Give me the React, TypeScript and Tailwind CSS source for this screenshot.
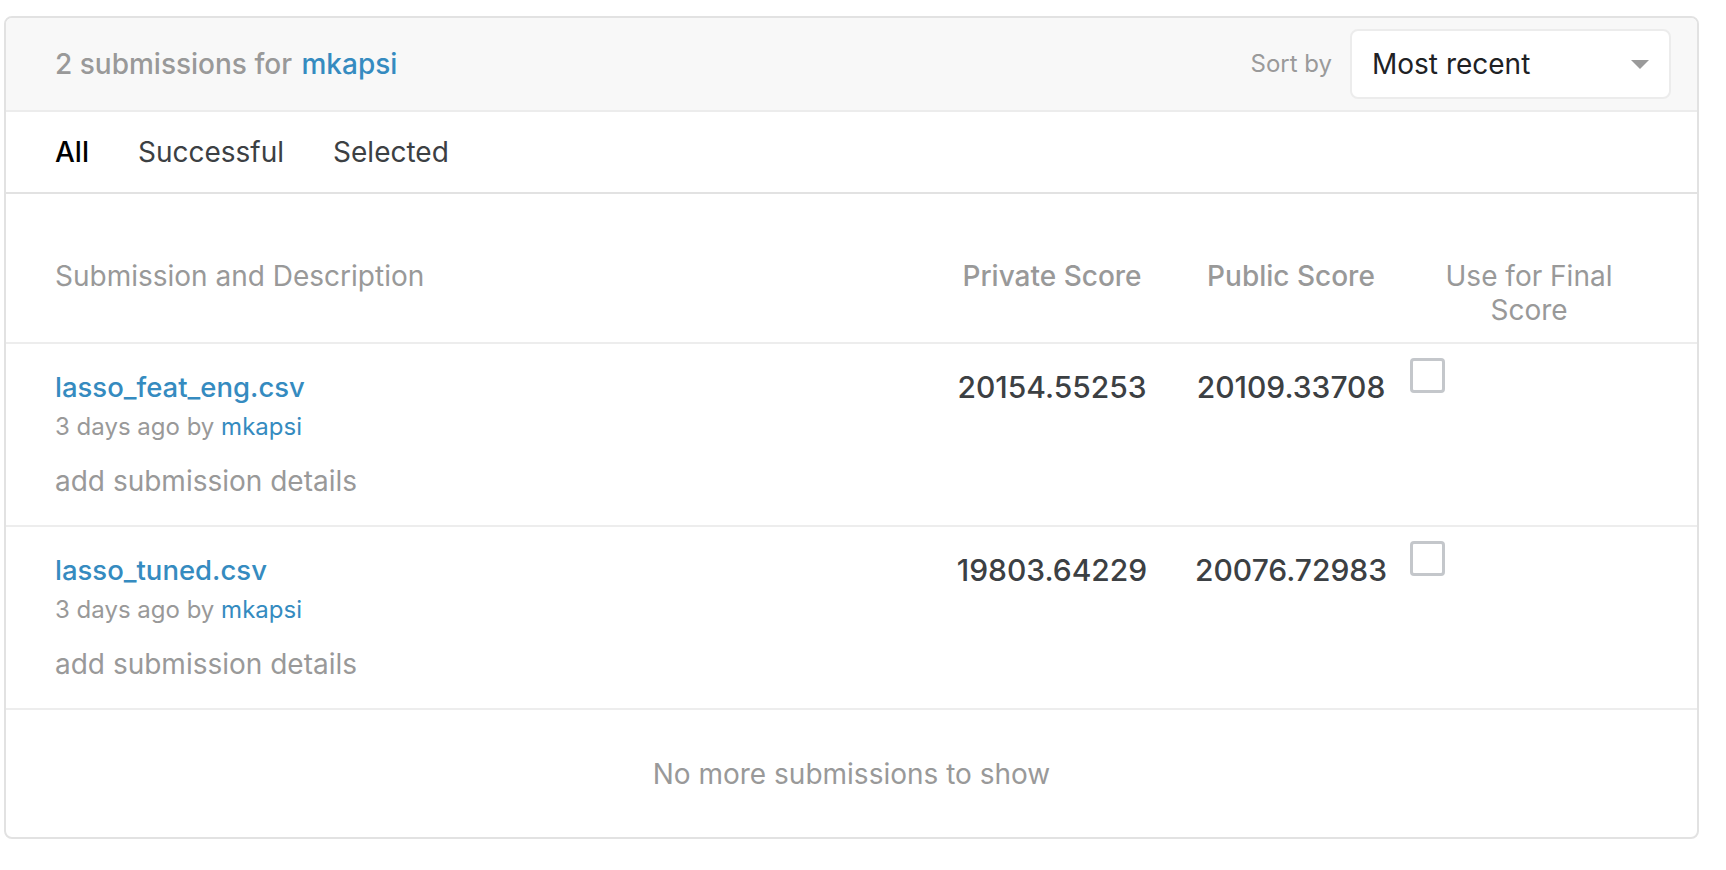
import React from "react";

interface Submission {
  id: number;
  file: string;
  age: string;
  user: string;
  privateScore: string;
  publicScore: string;
}

const submissions: Submission[] = [
  {
    id: 1,
    file: "lasso_feat_eng.csv",
    age: "3 days ago",
    user: "mkapsi",
    privateScore: "20154.55253",
    publicScore: "20109.33708",
  },
  {
    id: 2,
    file: "lasso_tuned.csv",
    age: "3 days ago",
    user: "mkapsi",
    privateScore: "19803.64229",
    publicScore: "20076.72983",
  },
];

const tabs = ["All", "Successful", "Selected"];

const SubmissionRow: React.FC<{ item: Submission }> = ({ item }) => (
  <div className="flex items-start pl-[49px] pr-[47px] pb-[27px] border-b-2 border-[#ededed]">
    <div className="flex-1 pt-[26px]">
      <a className="block text-[27.5px] leading-[34px] font-medium text-[#358bc0]">
        {item.file}
      </a>
      <div className="mt-[8px] text-[24px] leading-[30px] text-[#999]">
        {item.age} by <span className="text-[#358bc0]">{item.user}</span>
      </div>
      <div className="mt-[22px] text-[28px] leading-[34px] text-[#999]">
        add submission details
      </div>
    </div>
    <div className="w-[244px] pt-[26px] text-center text-[30px] leading-[34px] font-medium text-[#3c4043]">
      {item.privateScore}
    </div>
    <div className="w-[234px] pt-[26px] text-center text-[30px] leading-[34px] font-medium text-[#3c4043]">
      {item.publicScore}
    </div>
    <div className="w-[242px] pt-[14px] pl-[2px]">
      <div className="w-[35px] h-[35px] border-[3px] border-[#c4c7cb] rounded-[4px] bg-white" />
    </div>
  </div>
);

export default function App() {
  return (
    <div className="min-h-screen bg-white pt-4 pl-[4px] pr-[27px] font-[Inter,sans-serif]">
      <div className="border-2 border-[#e2e2e2] rounded-lg overflow-hidden">
        {/* header */}
        <div className="h-[94px] bg-[#f8f8f8] flex items-center justify-between pl-[49px] pr-[26px] border-b-2 border-[#ececec]">
          <div className="text-[28px] font-medium text-[#999]">
            2 submissions for <span className="ml-[2px] text-[#358bc0]">mkapsi</span>
          </div>
          <div className="flex items-center gap-[18px]">
            <span className="text-[24px] text-[#9a9a9a]">Sort by</span>
            <div className="w-[321px] h-[70px] bg-white border-2 border-[#ececec] rounded-lg flex items-center justify-between pl-[20px] pr-[20px]">
              <span className="text-[28px] text-[#202124]">Most recent</span>
              <svg width="18" height="9" viewBox="0 0 18 9">
                <polygon points="0,0 18,0 9,9" fill="#9a9a9a" />
              </svg>
            </div>
          </div>
        </div>

        {/* tabs */}
        <div className="h-[82px] flex items-center gap-[49px] pl-[49px] border-b-2 border-[#e2e2e2] text-[28px]">
          {tabs.map((t, i) => (
            <span
              key={t}
              className={i === 0 ? "font-medium text-black" : "text-[#3c4043]"}
            >
              {t}
            </span>
          ))}
        </div>

        {/* table head */}
        <div className="flex items-start pl-[49px] pr-[47px] pt-[65px] pb-[15px] border-b-2 border-[#ededed] text-[28px] leading-[34px] text-[#999]">
          <div className="flex-1">Submission and Description</div>
          <div className="w-[244px] text-center font-medium">Private Score</div>
          <div className="w-[234px] text-center font-medium">Public Score</div>
          <div className="w-[242px] text-center">
            Use for Final
            <br />
            Score
          </div>
        </div>

        {submissions.map((s) => (
          <SubmissionRow key={s.id} item={s} />
        ))}

        <div className="h-[127px] flex items-center justify-center text-[28px] text-[#999]">
          No more submissions to show
        </div>
      </div>
    </div>
  );
}
